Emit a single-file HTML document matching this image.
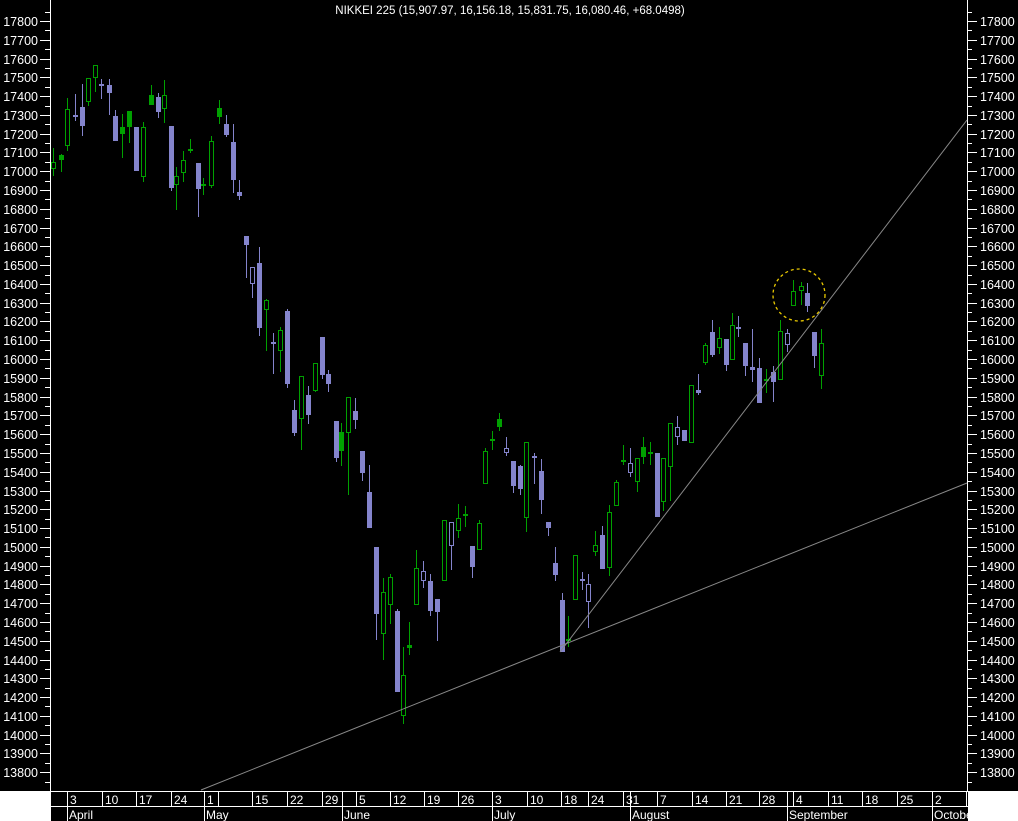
<!DOCTYPE html>
<html><head><meta charset="utf-8"><style>
html,body{margin:0;padding:0;background:#000;overflow:hidden}
svg{display:block}
text{font-family:"Liberation Sans",sans-serif;fill:#fff}
</style></head><body>
<svg id="s" width="1018" height="821" xmlns="http://www.w3.org/2000/svg">
<rect width="1018" height="821" fill="#000"/>
<text x="510" y="14" font-size="11.5" text-anchor="middle">NIKKEI 225 (15,907.97, 16,156.18, 15,831.75, 16,080.46, +68.0498)</text>
<g id="g"></g>
<line x1="201" y1="790" x2="967" y2="483" stroke="#888" stroke-width="1"/>
<line x1="560" y1="652" x2="967" y2="120" stroke="#888" stroke-width="1"/>
<circle cx="799" cy="295" r="26" fill="none" stroke="#e8c800" stroke-width="1.3" stroke-dasharray="3,3"/>
</svg>
<script>
var NS="http://www.w3.org/2000/svg",g=document.getElementById('g');
function el(t,a,txt){var e=document.createElementNS(NS,t);for(var k in a)e.setAttribute(k,a[k]);if(txt!=null)e.textContent=txt;g.appendChild(e);return e;}
var P="#8484cc",GR="#00a000";
var C=[
[53,162,169,148,176,'g'],[61,155,160,154,172,'G'],[67,109,146,98,151,'g'],[75,115,116,94,121,'p'],[82,107,126,84,136,'p'],
[88,78,102,78,106,'g'],[95,65,78,65,92,'g'],[101,84,86,79,99,'p'],[109,85,93,79,115,'p'],[115,116,141,110,141,'p'],
[122,127,134,114,158,'G'],[129,111,127,111,143,'G'],[136,127,171,127,171,'p'],[143,127,177,122,182,'g'],[151,95,105,85,105,'G'],
[158,97,112,93,118,'p'],[164,95,109,80,123,'g'],[171,126,188,126,191,'p'],[176,176,185,167,210,'g'],[183,160,173,151,182,'g'],
[190,149,150,139,153,'G'],[198,163,189,163,217,'p'],[203,184,185,178,195,'g'],[211,141,186,136,188,'g'],[219,108,117,100,124,'G'],
[226,124,135,115,137,'p'],[233,142,180,124,193,'p'],[239,192,196,180,200,'p'],
[246,236,245,236,278,'p'],[252,267,284,267,298,'q'],[259,263,328,247,336,'p'],[266,300,310,299,351,'g'],[273,342,343,333,374,'q'],
[280,330,351,327,372,'g'],[287,311,384,309,388,'p'],[294,410,433,400,436,'p'],[301,376,419,376,450,'g'],[308,395,415,386,424,'p'],
[315,363,391,363,392,'g'],[322,337,375,337,379,'p'],[328,374,384,370,392,'p'],[336,421,458,421,462,'p'],[341,432,451,423,466,'G'],
[348,397,433,397,495,'g'],[355,411,420,398,429,'p'],[362,451,473,451,481,'p'],[369,492,528,465,528,'p'],[376,547,614,547,640,'p'],
[383,592,634,578,660,'g'],[390,577,605,574,624,'g'],[397,611,692,609,692,'p'],[403,675,716,647,724,'g'],[409,645,648,622,655,'G'],
[416,568,605,550,605,'g'],[423,571,581,561,588,'q'],[430,581,611,574,616,'p'],[437,599,612,599,641,'p'],[444,520,581,520,581,'g'],
[451,522,546,522,570,'q'],[458,518,531,504,538,'g'],[465,514,515,506,527,'G'],[472,546,567,546,578,'p'],[479,523,550,520,550,'g'],
[485,451,484,448,484,'g'],[492,439,440,431,450,'G'],[499,419,427,413,431,'G'],[506,448,453,437,456,'q'],[513,461,486,461,493,'p'],
[520,466,489,465,495,'p'],[526,442,518,442,532,'g'],[534,456,458,453,484,'p'],[541,471,500,459,514,'p'],[548,522,528,522,536,'p'],
[555,563,575,547,581,'p'],[562,600,652,593,652,'p'],[568,639,640,616,647,'G'],[575,555,600,555,600,'g'],[582,579,580,572,590,'q'],
[588,584,602,574,628,'q'],[595,545,552,531,556,'g'],[602,535,569,526,569,'p'],[609,512,568,505,576,'g'],[616,482,506,480,506,'g'],
[623,460,461,445,465,'G'],[630,463,473,448,477,'q'],[637,458,482,458,492,'g'],[643,447,457,437,464,'G'],[650,452,453,442,465,'G'],
[657,453,517,453,517,'p'],[663,458,502,458,511,'g'],[670,423,467,423,501,'g'],[677,427,437,416,445,'q'],[684,430,441,430,441,'p'],
[691,385,443,385,443,'g'],[698,390,393,374,395,'p'],[705,345,363,343,365,'g'],[712,332,355,320,357,'p'],[719,338,348,327,354,'g'],
[726,339,365,339,371,'p'],[732,325,360,313,360,'g'],[738,327,328,316,337,'p'],[745,343,366,343,376,'p'],[752,367,370,329,382,'p'],
[759,368,403,358,403,'p'],[766,379,381,369,393,'g'],[773,372,382,366,402,'p'],[780,331,380,320,380,'g'],[787,333,345,329,352,'q'],
[793,291,306,280,306,'g'],[801,286,291,282,305,'g'],[807,293,306,283,312,'p'],[814,332,356,332,368,'p'],[821,343,376,329,389,'g']
];
C.forEach(function(c){
 var x=c[0],t=c[5],col=(t=='g'||t=='G')?GR:P,fill=(t=='G'||t=='p');
 el('line',{x1:x+0.5,y1:c[3],x2:x+0.5,y2:c[4],stroke:col,'stroke-width':1});
 var h=c[2]-c[1];
 if(h<=1){el('rect',{x:x-2,y:c[1],width:5,height:2,fill:col});}
 else if(fill){el('rect',{x:x-2,y:c[1],width:5,height:h,fill:col});}
 else{el('rect',{x:x-1.5,y:c[1]+0.5,width:4,height:h-1,fill:'#000',stroke:col,'stroke-width':1});}
});
el('line',{x1:50.5,y1:0,x2:50.5,y2:791,stroke:'#fff'});
el('line',{x1:967.5,y1:0,x2:967.5,y2:791,stroke:'#fff'});
for(var p=13700;p<=17850;p+=50){
 var y=Math.round(21+(17800-p)*0.1878)+0.5; if(y<0||y>790)continue;
 var maj=(p%100==0);
 el('line',{x1:maj?40:45,y1:y,x2:50,y2:y,stroke:'#fff'});
 el('line',{x1:967,y1:y,x2:maj?977:972,y2:y,stroke:'#fff'});
 if(maj&&p>=13800){
  el('text',{x:38,y:y+4.5,'font-size':12.5,'text-anchor':'end'},p);
  el('text',{x:980,y:y+4.5,'font-size':12.5},p);
 }
}
el('rect',{x:0,y:791,width:50,height:30,fill:'#fff'});
el('line',{x1:50,y1:791.5,x2:968,y2:791.5,stroke:'#fff'});
el('line',{x1:50,y1:806.5,x2:968,y2:806.5,stroke:'#fff'});
el('line',{x1:50.5,y1:791,x2:50.5,y2:821,stroke:'#fff'});
var D=[[67,'3'],[102,'10'],[136,'17'],[171,'24'],[204,'1'],[218,''],[252,'15'],[287,'22'],[322,'29'],[342,''],[356,'5'],[390,'12'],[424,'19'],[458,'26'],[492,'3'],[527,'10'],[561,'18'],[588,'24'],[623,'31'],[630,''],[657,'7'],[692,'14'],[726,'21'],[759,'28'],[787,''],[793,'4'],[828,'11'],[862,'18'],[897,'25'],[932,'2'],[966,'9']];
D.forEach(function(d){el('line',{x1:d[0]+0.5,y1:791,x2:d[0]+0.5,y2:806,stroke:'#fff'});if(d[1])el('text',{x:d[0]+3,y:804,'font-size':12},d[1]);});
var M=[[67,'April'],[204,'May'],[342,'June'],[492,'July'],[630,'August'],[787,'September'],[932,'October']];
M.forEach(function(m){el('line',{x1:m[0]+0.5,y1:806,x2:m[0]+0.5,y2:821,stroke:'#fff'});el('text',{x:m[0]+2,y:819,'font-size':12},m[1]);});
el('rect',{x:968,y:791,width:50,height:30,fill:'#fff'});
</script>
</body></html>
